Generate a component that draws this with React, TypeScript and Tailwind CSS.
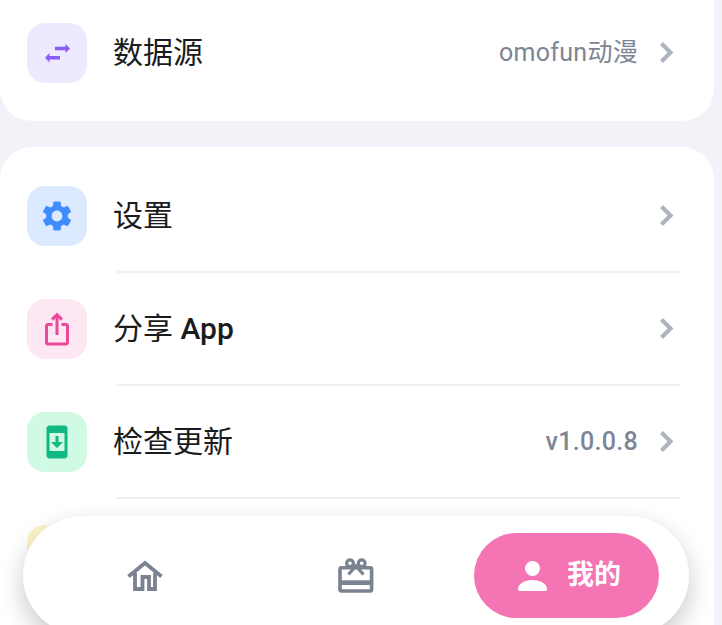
import { MdIosShare, MdSecurityUpdate, MdSettings } from "react-icons/md";
import type { ReactNode } from "react";

const FONT = "font-['Roboto','Noto_Sans_CJK_SC',sans-serif]";

function SwapIcon() {
  return (
    <svg viewBox="0 0 26 20" className="w-[26px] h-5 text-[#8b5cf6]" fill="currentColor">
      <path d="M11 3.750h10.500V1L26 5.500 21.500 10V7.250H11z" />
      <path d="M16 13h-10.500V10L1 14.700l4.500 4.700V16.500H16z" />
    </svg>
  );
}

function Chevron() {
  return (
    <svg viewBox="0 0 15 23" className="w-[15px] h-[23px] text-[#aeb3c0]" fill="none" stroke="currentColor" strokeWidth="4.200">
      <path d="M2.500 2.500 11.500 11.500 2.500 20.500" />
    </svg>
  );
}

function HomeIcon() {
  return (
    <svg viewBox="0 0 36 32" className="w-9 h-8 text-[#7b8290]" fill="none" stroke="currentColor" strokeWidth="3.800">
      <path d="M1.500 16.500 18 3l16.500 13.500" />
      <path d="M8 13v16h7.500V17h6.500v12h6V13" />
    </svg>
  );
}

function GiftIcon() {
  return (
    <svg viewBox="0 0 38 36" className="w-[38px] h-9 text-[#7b8290]" fill="none" stroke="currentColor" strokeWidth="3.600">
      <rect x="3" y="9.700" width="31.600" height="23.300" rx="1.500" />
      <rect x="3" y="22.300" width="31.600" height="4.700" fill="currentColor" stroke="none" />
      <circle cx="13" cy="5.300" r="3.400" strokeWidth="3.200" />
      <circle cx="24.700" cy="5.300" r="3.400" strokeWidth="3.200" />
      <path d="M11.500 16.500 18.800 8l7.700 8.500" strokeWidth="3.200" />
    </svg>
  );
}

function PersonIcon() {
  return (
    <svg viewBox="0 0 32 34" className="w-8 h-[34px] text-white shrink-0" fill="currentColor">
      <circle cx="15.500" cy="9.500" r="7.500" />
      <path d="M1 30c0-5 6.500-9 14.500-9S30 25 30 30c0 1.500-.8 2-2 2H3c-1.200 0-2-.5-2-2z" />
    </svg>
  );
}

function Row({ icon, bg, label, value, divider, medium }: { icon: ReactNode; bg: string; label: ReactNode; value?: string; divider?: boolean; medium?: boolean }) {
  return (
    <div className="relative h-[113px] flex items-center pl-[27px] pr-[40px]">
      <div className={`w-[60px] h-[60px] rounded-[18px] flex items-center justify-center shrink-0 ${bg}`}>{icon}</div>
      <span className="ml-[26px] text-[30px] text-[#1a1c20]">{label}</span>
      <div className="ml-auto flex items-center gap-[21px]">
        {value && <span className={`text-[25px] tracking-[0.3px] text-[#7d8594] ${medium ? "font-medium" : ""}`}>{value}</span>}
        <Chevron />
      </div>
      {divider && <div className="absolute left-[117px] right-[34px] -bottom-px h-[2px] bg-[#eeeef3]" />}
    </div>
  );
}

export default function App() {
  return (
    <div className={`relative h-[625px] w-[722px] overflow-hidden bg-[#f2f3f8] ${FONT}`}>
      <div className="w-[714px] -mt-[4px] pb-[12px] bg-white rounded-b-[32px]">
        <Row icon={<SwapIcon />} bg="bg-[#ede9fe]" label="数据源" value="omofun动漫" />
      </div>
      <div className="w-[714px] mt-[26px] pt-[12px] pb-[80px] bg-white rounded-[32px]">
        <Row icon={<MdSettings className="w-9 h-9 text-[#3f8cff]" />} bg="bg-[#dbeafe]" label="设置" divider />
        <Row
          icon={<MdIosShare className="w-9 h-9 text-[#ec4899]" />}
          bg="bg-[#fce7f3]"
          label={<>分享 <span className="font-medium">App</span></>}
          divider
        />
        <Row icon={<MdSecurityUpdate className="w-9 h-9 text-[#10b981]" />} bg="bg-[#d1fae5]" label="检查更新" value="v1.0.0.8" medium divider />
        <Row icon={null} bg="bg-[#fef3c7]" label="" />
      </div>

      {/* floating tab bar */}
      <div className="absolute left-[23px] top-[516px] w-[666px] h-[119px] rounded-[60px] bg-white shadow-[0_-1px_0_#f3f3f6,0_10px_24px_rgba(0,0,0,0.22)] flex items-center pl-[104px] pr-[30px]">
        <HomeIcon />
        <div className="ml-[174px]">
          <GiftIcon />
        </div>
        <div className="ml-auto w-[185px] h-[85px] rounded-full bg-[#f574b4] flex items-center pl-[43px] gap-[18px] text-white">
          <PersonIcon />
          <span className="text-[27px] font-bold">我的</span>
        </div>
      </div>
    </div>
  );
}
